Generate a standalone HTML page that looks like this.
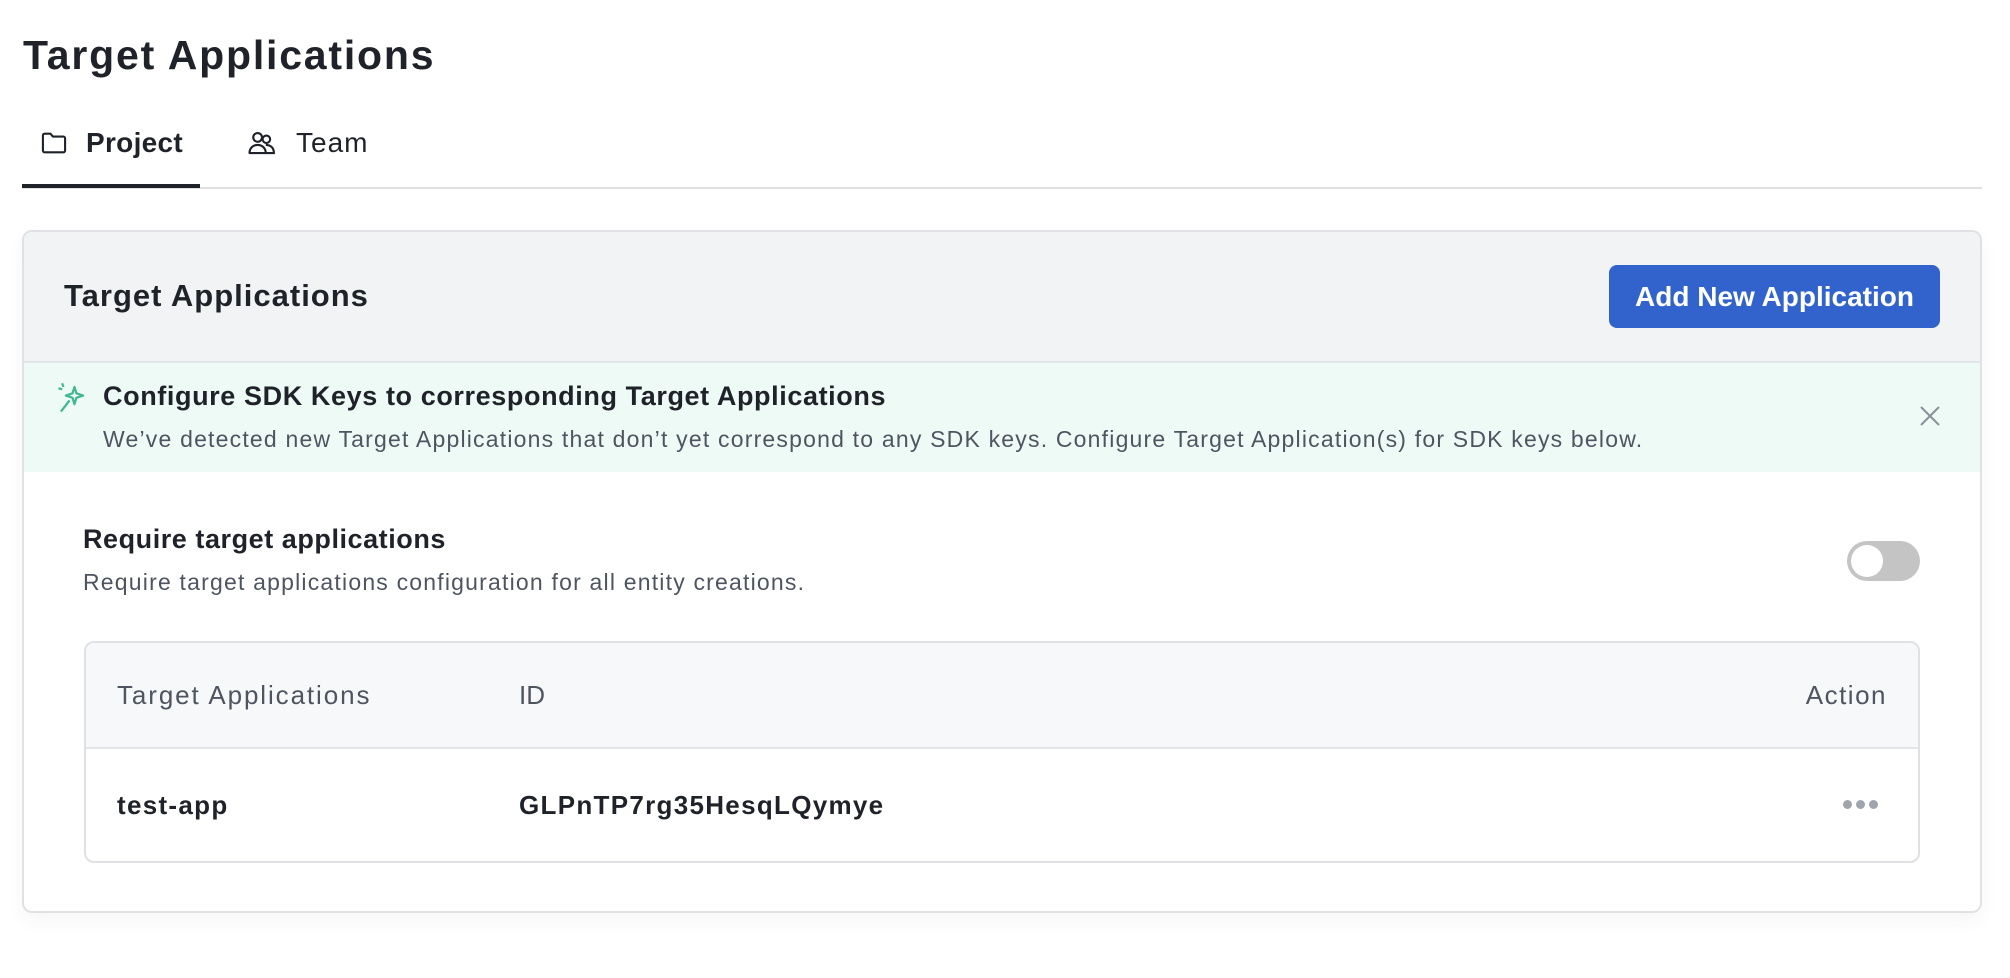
<!DOCTYPE html>
<html><head><meta charset="utf-8"><style>
*{box-sizing:border-box;margin:0;padding:0}
body{width:2010px;height:978px;background:#fff;font-family:"Liberation Sans",sans-serif;color:#1f2329;position:relative;overflow:hidden}
.abs{position:absolute}
h1{position:absolute;left:23px;top:28px;font-size:41px;font-weight:bold;line-height:54px;letter-spacing:1.8px}
.tab{position:absolute;top:125px;font-size:28px;line-height:36px;display:flex;align-items:center}
.card{position:absolute;left:22px;top:230px;width:1960px;height:683px;border:2px solid #dfe1e5;border-radius:10px;overflow:hidden;box-shadow:0 8px 20px rgba(0,0,0,0.04)}
.hdr{position:absolute;left:0;top:0;right:0;height:131px;background:#f2f3f5;border-bottom:2px solid #e3e5e8}
.btn{position:absolute;left:1585px;top:33px;width:331px;height:63px;background:#3262cc;border-radius:8px;color:#fff;font-size:28px;font-weight:bold;display:flex;align-items:center;justify-content:center}
.ban{position:absolute;left:0;top:131px;right:0;height:109px;background:#eefaf6}
.tbl{position:absolute;left:60px;top:409px;width:1836px;height:222px;border:2px solid #dfe1e5;border-radius:10px;overflow:hidden}
.th{position:absolute;left:0;top:0;right:0;height:106px;background:#f7f8fa;border-bottom:2px solid #e3e5e8;font-size:26px;color:#4e5561}
</style></head><body>
<h1>Target Applications</h1>
<div class="tab" style="left:40px;font-weight:bold">
<svg width="28" height="28" viewBox="0 0 24 24" fill="none" stroke="#1f2329" stroke-width="1.8" stroke-linejoin="round"><path d="M2.5 5.5a1.5 1.5 0 0 1 1.5-1.5h5l2 2.5h9a1.5 1.5 0 0 1 1.5 1.5v10.5a1.5 1.5 0 0 1-1.5 1.5H4a1.5 1.5 0 0 1-1.5-1.5z"/></svg>
<span style="margin-left:18px;letter-spacing:0.3px">Project</span></div>
<div class="tab" style="left:247px">
<svg width="30" height="30" viewBox="0 0 24 24" fill="none" stroke="#1f2329" stroke-width="1.7"><circle cx="8.5" cy="7.5" r="3.5"/><path d="M2 20c0-4 3-6.5 6.5-6.5S15 16 15 20z" stroke-linejoin="round"/><circle cx="15.5" cy="9" r="3"/><path d="M15 13.5c3.5 0 6.5 2 6.5 6.5H15"/></svg>
<span style="margin-left:19px;letter-spacing:1px">Team</span></div>
<div class="abs" style="left:22px;top:187px;width:1960px;height:2px;background:#dfe1e5"></div>
<div class="abs" style="left:22px;top:184px;width:178px;height:4px;background:#1f2329"></div>
<div class="card">
 <div class="hdr">
  <div class="abs" style="left:40px;top:44px;font-size:31px;font-weight:bold;line-height:40px;letter-spacing:1px">Target Applications</div>
  <div class="btn">Add New Application</div>
 </div>
 <div class="ban">
  <svg class="abs" style="left:33px;top:19px" width="30" height="32" viewBox="0 0 24 26" fill="none" stroke="#3fb88e" stroke-width="1.8" stroke-linejoin="round"><path d="M14 4l1.6 5.2L21 11l-5.4 1.8L14 18l-1.6-5.2L7 11l5.4-1.8z"/><path d="M10 15l-7 9"/><path d="M4 1l1 3M1 5l3 1"/></svg>
  <div class="abs" style="left:79px;top:16px;font-size:27px;font-weight:bold;line-height:34px;letter-spacing:0.6px">Configure SDK Keys to corresponding Target Applications</div>
  <div class="abs" style="left:79px;top:61px;font-size:23px;color:#4e5561;line-height:30px;letter-spacing:1.2px">We’ve detected new Target Applications that don’t yet correspond to any SDK keys. Configure Target Application(s) for SDK keys below.</div>
  <svg class="abs" style="left:1895px;top:42px" width="22" height="22" viewBox="0 0 22 22" stroke="#8a8f99" stroke-width="2"><path d="M2 2l18 18M20 2L2 20"/></svg>
 </div>
 <div class="abs" style="left:59px;top:290px;font-size:27px;font-weight:bold;line-height:34px;letter-spacing:0.55px">Require target applications</div>
 <div class="abs" style="left:59px;top:335px;font-size:23px;color:#4e5561;line-height:30px;letter-spacing:1.2px">Require target applications configuration for all entity creations.</div>
 <div class="abs" style="left:1823px;top:309px;width:73px;height:40px;border-radius:20px;background:#c4c4c4"><div class="abs" style="left:4px;top:4px;width:32px;height:32px;border-radius:50%;background:#fff"></div></div>
 <div class="tbl">
  <div class="th">
   <div class="abs" style="left:31px;top:37px;letter-spacing:1.9px">Target Applications</div>
   <div class="abs" style="left:433px;top:37px">ID</div>
   <div class="abs" style="right:31px;top:37px;letter-spacing:1.5px">Action</div>
  </div>
  <div class="abs" style="left:31px;top:147px;font-size:26px;font-weight:bold;letter-spacing:1.3px">test-app</div>
  <div class="abs" style="left:433px;top:147px;font-size:26px;font-weight:bold;letter-spacing:1.3px">GLPnTP7rg35HesqLQymye</div>
  <div class="abs" style="left:1757px;top:157px;display:flex;gap:4px"><i style="width:9px;height:9px;border-radius:50%;background:#a0a4ab"></i><i style="width:9px;height:9px;border-radius:50%;background:#a0a4ab"></i><i style="width:9px;height:9px;border-radius:50%;background:#a0a4ab"></i></div>
 </div>
</div>
</body></html>
